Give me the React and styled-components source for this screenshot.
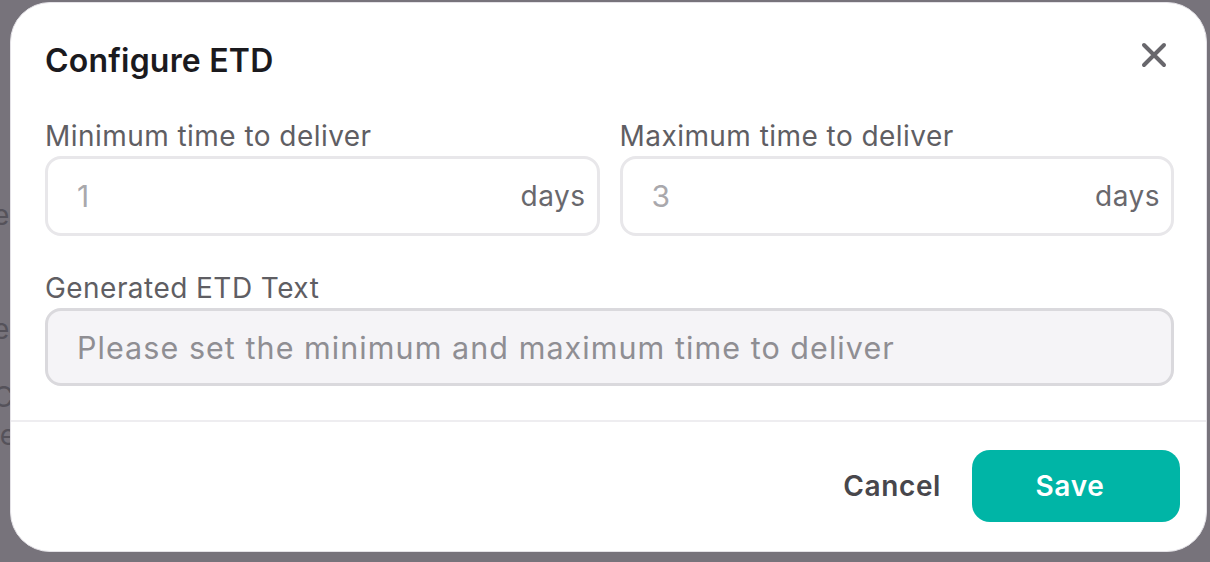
import React, { useState } from 'react';
import styled, { createGlobalStyle } from 'styled-components';

const GlobalStyle = createGlobalStyle`
  html, body { margin: 0; padding: 0; }
  body {
    background: #77737b;
    font-family: Inter, "Noto Sans", sans-serif;
    -webkit-font-smoothing: antialiased;
  }
`;

const Page = styled.div`
  position: relative;
  width: 1210px;
  height: 562px;
  overflow: hidden;
  background: #77737b;
`;

const Backdrop = styled.div`
  display: flex;
  flex-direction: column;
  padding-top: 196px;
  margin-left: -7px;
  color: #55525a;
  font-size: 28px;
  line-height: 38px;
`;

const BackLine = styled.div`
  margin-top: ${p => p.gap || 0}px;
`;

const Modal = styled.div`
  position: absolute;
  left: 10px;
  top: 2px;
  width: 1197px;
  height: 550px;
  box-sizing: border-box;
  background: #fff;
  border-radius: 40px;
  border: 1px solid #e4e2e7;
  display: flex;
  flex-direction: column;
  overflow: hidden;
`;

const Body = styled.div`
  padding: 37px 32px 34px 34px;
  display: flex;
  flex-direction: column;
`;

const Header = styled.div`
  display: flex;
  align-items: center;
  justify-content: space-between;
  height: 40px;
  margin-bottom: 40px;
`;

const Title = styled.h2`
  margin: 0;
  font-size: 32px;
  font-weight: 600;
  color: #1b1a1e;
  letter-spacing: 0.2px;
`;

const CloseButton = styled.button`
  border: none;
  background: none;
  padding: 0;
  margin: 0 6px 10px 0;
  width: 28px;
  height: 28px;
  display: flex;
  align-items: center;
  justify-content: center;
  cursor: pointer;
`;

const Row = styled.div`
  display: grid;
  grid-template-columns: minmax(0, 1fr) minmax(0, 1fr);
  gap: 20px;
`;

const Field = styled.div`
  display: flex;
  flex-direction: column;
  gap: 4px;
  min-width: 0;
  margin-top: ${p => p.spaced ? '36px' : '0'};
`;

const Label = styled.label`
  font-size: 28px;
  line-height: 32px;
  color: #5f5e63;
  letter-spacing: 0.45px;
  white-space: nowrap;
`;

const InputBox = styled.div`
  height: ${p => p.disabled ? 78 : 80}px;
  box-sizing: border-box;
  border: 3px solid;
  border-radius: 16px;
  background: ${p => p.disabled ? '#f5f4f7' : '#fff'};
  border-color: ${p => p.disabled ? '#dad9dd' : '#e8e7ea'};
  display: flex;
  align-items: center;
  padding: 0 11px 0 29px;
`;

const Value = styled.input`
  flex: 1;
  width: 0;
  min-width: 0;
  border: none;
  outline: none;
  background: transparent;
  font-family: inherit;
  font-size: 30px;
  color: #a9a8ac;
  padding: 0;
`;

const Suffix = styled.span`
  font-size: 28px;
  color: #69686d;
  letter-spacing: 0.5px;
`;

const Placeholder = styled.span`
  font-size: 30.5px;
  color: #8f8e93;
  letter-spacing: 1.05px;
  white-space: nowrap;
`;

const Divider = styled.div`
  height: 2px;
  background: #eeedf0;
`;

const Footer = styled.div`
  display: flex;
  justify-content: flex-end;
  align-items: center;
  gap: 31px;
  padding: 28px 26px 29px 0;
`;

const CancelButton = styled.button`
  border: none;
  background: none;
  padding: 0;
  font-family: inherit;
  font-size: 28px;
  font-weight: 600;
  color: #48474c;
  letter-spacing: 0.6px;
  cursor: pointer;
`;

const SaveButton = styled.button`
  width: 208px;
  height: 72px;
  border: none;
  border-radius: 18px;
  padding: 0 12px 0 0;
  background: #00b5a6;
  color: #fff;
  font-family: inherit;
  font-size: 28px;
  font-weight: 600;
  letter-spacing: 0.7px;
  cursor: pointer;
`;

function CloseIcon() {
  return (
    <svg width="26" height="26" viewBox="0 0 26 26" fill="none">
      <path d="M3 3L23 23M23 3L3 23" stroke="#68676c" strokeWidth="4" strokeLinecap="round" />
    </svg>
  );
}

export default function App() {
  const [min, setMin] = useState('1');
  const [max, setMax] = useState('3');

  return (
    <>
      <GlobalStyle />
      <Page>
        <Backdrop>
          <BackLine>e</BackLine>
          <BackLine gap={76}>e</BackLine>
          <BackLine gap={30}>C</BackLine>
          <BackLine>le</BackLine>
        </Backdrop>

        <Modal>
          <Body>
            <Header>
              <Title>Configure ETD</Title>
              <CloseButton aria-label="Close"><CloseIcon /></CloseButton>
            </Header>

            <Row>
              <Field>
                <Label>Minimum time to deliver</Label>
                <InputBox>
                  <Value value={min} onChange={e => setMin(e.target.value)} />
                  <Suffix>days</Suffix>
                </InputBox>
              </Field>
              <Field>
                <Label>Maximum time to deliver</Label>
                <InputBox>
                  <Value value={max} onChange={e => setMax(e.target.value)} />
                  <Suffix>days</Suffix>
                </InputBox>
              </Field>
            </Row>

            <Field spaced>
              <Label>Generated ETD Text</Label>
              <InputBox disabled>
                <Placeholder>Please set the minimum and maximum time to deliver</Placeholder>
              </InputBox>
            </Field>
          </Body>

          <Divider />

          <Footer>
            <CancelButton>Cancel</CancelButton>
            <SaveButton>Save</SaveButton>
          </Footer>
        </Modal>
      </Page>
    </>
  );
}
